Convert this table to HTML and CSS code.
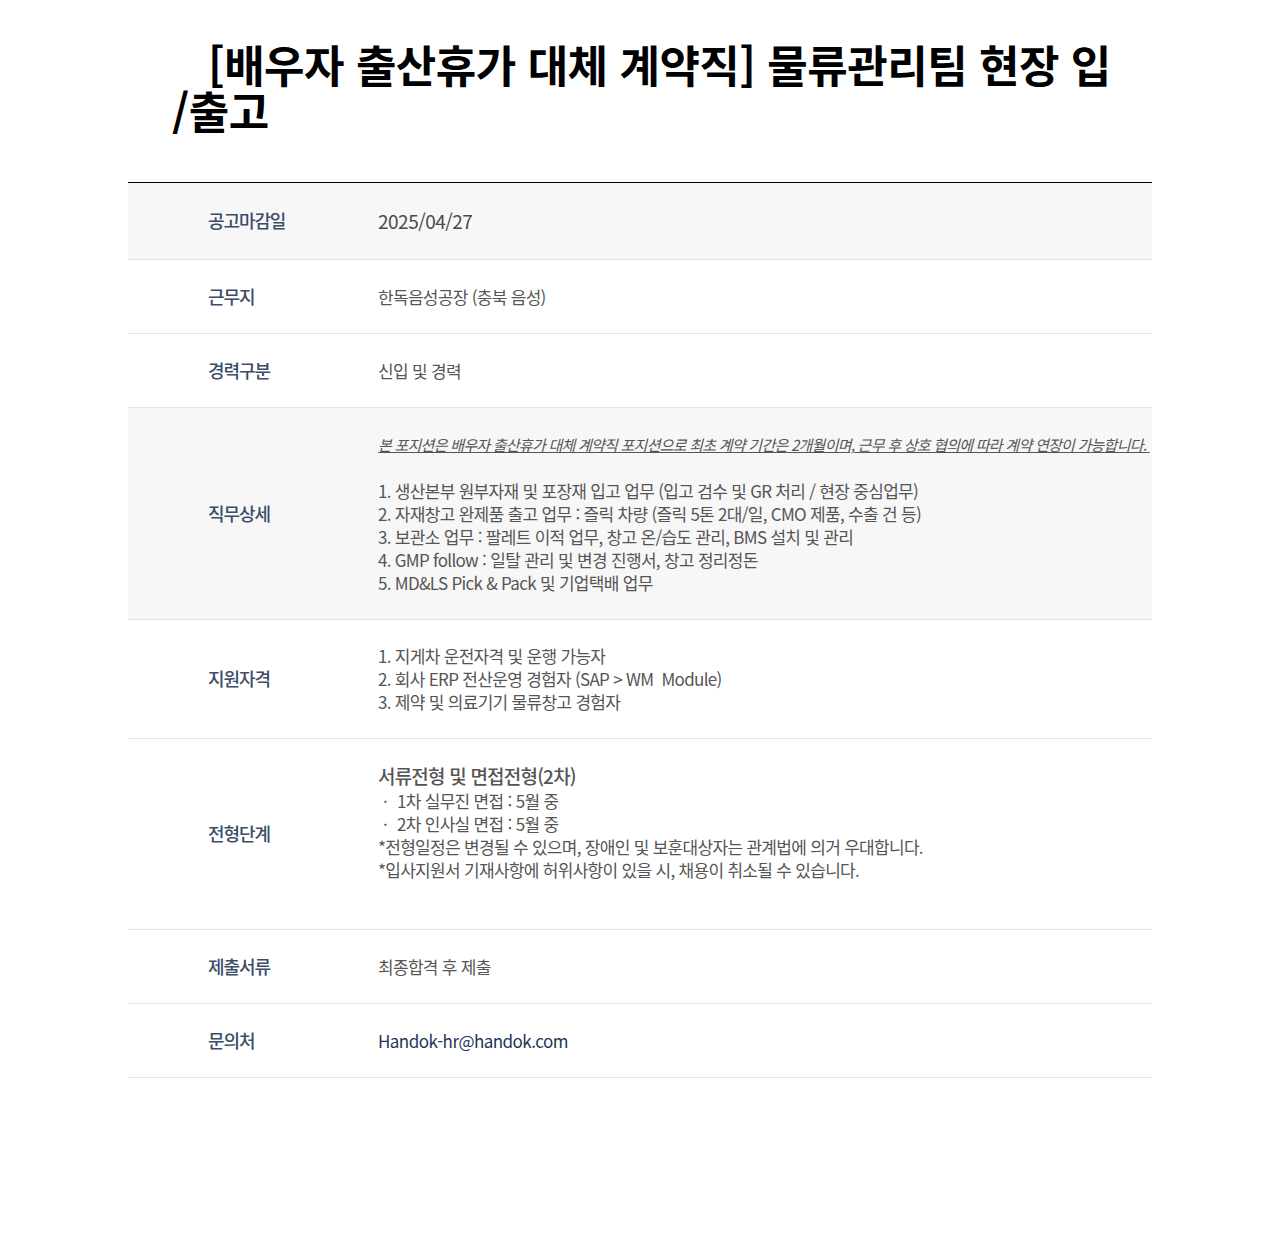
FILE: index.html
```html
<!DOCTYPE html>
<html lang="ko">
<head>
<meta charset="utf-8">
<title>채용공고</title>
<link rel="stylesheet" href="styles.css">
</head>
<body>
<div class="page">
  <h1 class="title">[배우자 출산휴가 대체 계약직] 물류관리팀 현장 입<wbr>/출고</h1>
  <div class="table">
    <div class="row shaded">
      <div class="label">공고마감일</div>
      <div class="value date">2025/04/27</div>
    </div>
    <div class="row">
      <div class="label">근무지</div>
      <div class="value">한독음성공장 (충북 음성)</div>
    </div>
    <div class="row">
      <div class="label">경력구분</div>
      <div class="value">신입 및 경력</div>
    </div>
    <div class="row shaded tall">
      <div class="label">직무상세</div>
      <div class="value clip">
        <p class="note">본 포지션은 배우자 출산휴가 대체 계약직 포지션으로 최초 계약 기간은 2개월이며, 근무 후 상호 협의에 따라 계약 연장이 가능합니다.&nbsp;</p>
        <p class="blank">&nbsp;</p>
        <p>1. 생산본부 원부자재 및 포장재 입고 업무 (입고 검수 및 GR 처리 / 현장 중심업무)</p>
        <p>2. 자재창고 완제품 출고 업무 : 즐릭 차량 (즐릭 5톤 2대/일, CMO 제품, 수출 건 등)</p>
        <p>3. 보관소 업무 : 팔레트 이적 업무, 창고 온/습도 관리, BMS 설치 및 관리</p>
        <p>4. GMP follow : 일탈 관리 및 변경 진행서, 창고 정리정돈</p>
        <p>5. MD&amp;LS Pick &amp; Pack 및 기업택배 업무</p>
      </div>
    </div>
    <div class="row mid">
      <div class="label">지원자격</div>
      <div class="value">
        <p>1. 지게차 운전자격 및 운행 가능자</p>
        <p>2. 회사 ERP 전산운영 경험자 (SAP &gt; WM&nbsp; Module)</p>
        <p>3. 제약 및 의료기기 물류창고 경험자</p>
      </div>
    </div>
    <div class="row steps">
      <div class="label">전형단계</div>
      <div class="value">
        <p class="strong">서류전형 및 면접전형(2차)</p>
        <p><span class="dot">·</span>1차 실무진 면접 : 5월 중</p>
        <p><span class="dot">·</span>2차 인사실 면접 : 5월 중</p>
        <p>*전형일정은 변경될 수 있으며, 장애인 및 보훈대상자는 관계법에 의거 우대합니다.</p>
        <p>*입사지원서 기재사항에 허위사항이 있을 시, 채용이 취소될 수 있습니다.</p>
        <p class="blank">&nbsp;</p>
      </div>
    </div>
    <div class="row">
      <div class="label">제출서류</div>
      <div class="value">최종합격 후 제출</div>
    </div>
    <div class="row">
      <div class="label">문의처</div>
      <div class="value mail">Handok-hr@handok.com</div>
    </div>
  </div>
</div>
</body>
</html>
```

FILE: styles.css
```css
* { box-sizing: border-box; }
html, body {
  margin: 0;
  padding: 0;
  background: #ffffff;
}
body {
  font-family: "Noto Sans CJK KR", "Noto Sans", sans-serif;
  color: #555555;
}
.page {
  width: 1024px;
  margin: 0 auto;
  padding-top: 41px;
}
.title {
  margin: 0 28px 0 44px;
  font-size: 44px;
  font-weight: 700;
  line-height: 46px;
  letter-spacing: -0.5px;
  color: #000000;
  text-indent: 36px;
  word-break: break-all;
}
.table {
  margin-top: 49px;
  border-top: 1px solid #000000;
}
.row {
  display: flex;
  align-items: center;
  min-height: 74px;
  border-bottom: 1px solid #e1e3ea;
}
.row:first-child { min-height: 77px; }
.row.shaded { background: #f7f7f7; }
.label {
  width: 250px;
  flex: none;
  padding-left: 80px;
  padding-bottom: 2px;
  font-size: 18px;
  font-weight: 500;
  letter-spacing: -1.1px;
  color: #3c4c6a;
}
.value {
  flex: 1;
  min-width: 0;
  font-size: 17px;
  line-height: 23px;
  letter-spacing: -0.7px;
  color: #555555;
}
.value p { margin: 0; }
.value.date {
  font-size: 19px;
  letter-spacing: -0.5px;
  color: #4a4a4a;
  padding-bottom: 2px;
}
.value.clip {
  overflow: hidden;
  padding: 25px 0 25px;
}
.note {
  white-space: nowrap;
  font-style: italic;
  text-decoration: underline;
  font-size: 15px;
  letter-spacing: -0.75px;
}
.row.mid .value { padding: 24px 0 25px; }
.row.steps .value { padding: 23px 0 25px; }
.strong {
  font-size: 19px;
  font-weight: 500;
  line-height: 27px;
  letter-spacing: -0.8px;
}
.dot {
  display: inline-block;
  width: 19px;
  padding-left: 5px;
}
.value.mail {
  color: #1e3558;
  letter-spacing: -0.55px;
}
```
